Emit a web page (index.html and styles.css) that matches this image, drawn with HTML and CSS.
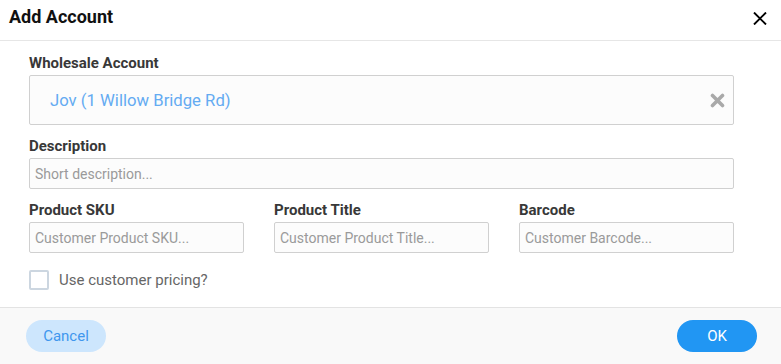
FILE: index.html
```html
<!DOCTYPE html>
<html lang="en">
<head>
    <meta charset="UTF-8">
    <meta name="viewport" content="width=device-width, initial-scale=1.0">
    <title>Add Account</title>
    <link rel="stylesheet" href="styles.css">
</head>
<body>
    <div class="modal">
        <div class="modal-header">
            <h2>Add Account</h2>
            <button class="close-btn" aria-label="Close">
                <svg width="14" height="13" viewBox="0 0 14 13">
                    <path d="M1 0.5 L13 12.5 M13 0.5 L1 12.5" stroke="#000" stroke-width="1.9" fill="none"/>
                </svg>
            </button>
        </div>

        <div class="modal-body">
            <div class="field">
                <label>Wholesale Account</label>
                <div class="select-box">
                    <span class="select-value">Jov (1 Willow Bridge Rd)</span>
                    <svg class="clear-icon" width="15" height="15" viewBox="0 0 15 15">
                        <path d="M2.5 2.5 L12.5 12.5 M12.5 2.5 L2.5 12.5" stroke="#a9a9a9" stroke-width="3.6" stroke-linecap="round" fill="none"/>
                    </svg>
                </div>
            </div>

            <div class="field">
                <label>Description</label>
                <input type="text" placeholder="Short description...">
            </div>

            <div class="field-row">
                <div class="field">
                    <label>Product SKU</label>
                    <input type="text" placeholder="Customer Product SKU...">
                </div>
                <div class="field">
                    <label>Product Title</label>
                    <input type="text" placeholder="Customer Product Title...">
                </div>
                <div class="field">
                    <label>Barcode</label>
                    <input type="text" placeholder="Customer Barcode...">
                </div>
            </div>

            <label class="check-row">
                <span class="checkbox"></span>
                <span>Use customer pricing?</span>
            </label>
        </div>

        <!-- Footer -->
        <div class="modal-footer">
            <button class="btn btn-cancel">Cancel</button>
            <button class="btn btn-ok">OK</button>
        </div>
    </div>
</body>
</html>
```

FILE: styles.css
```css
* { margin: 0; padding: 0; box-sizing: border-box; font-family: Roboto, "Liberation Sans", sans-serif; }
body { background: #fff; color: #333; }

.modal { width: 781px; height: 364px; display: flex; flex-direction: column; }

.modal-header {
    height: 41px;
    padding: 6px 14px 0 9px;
    display: flex;
    justify-content: space-between;
    align-items: flex-start;
    border-bottom: 1px solid #e6e6e6;
}
.modal-header h2 {
    font-size: 18px;
    line-height: 22px;
    font-weight: bold;
    color: #111;
}
.close-btn {
    margin-top: 6px;
    border: none;
    background: none;
    display: flex;
    cursor: pointer;
}

.modal-body {
    padding: 14px 47px 17px 29px;
}

.field { display: flex; flex-direction: column; margin-bottom: 13px; }
.field label {
    font-size: 15px;
    line-height: 17px;
    font-weight: bold;
    color: #383838;
    margin-bottom: 3px;
}

.select-box {
    height: 50px;
    border: 1px solid #d0d0d0;
    background: #fcfcfc;
    border-radius: 2px;
    display: flex;
    align-items: center;
    justify-content: space-between;
    padding: 0 8px 0 20px;
}
.select-value { font-size: 16.7px; color: #64abf2; }

input {
    height: 31px;
    border: 1px solid #d0d0d0;
    background: #fcfcfc;
    border-radius: 2px;
    padding: 0 5px;
    font-size: 14px;
    color: #333;
    outline: none;
}
input::placeholder { color: #9a9a9a; }

.field-row { display: grid; grid-template-columns: repeat(3, 1fr); column-gap: 30px; }
.field-row .field { margin-bottom: 17px; }

.check-row { display: flex; align-items: center; gap: 10px; font-size: 15px; color: #666; }
.checkbox {
    width: 20px;
    height: 20px;
    border: 2px solid #ccd6e0;
    border-radius: 2px;
    background: #fff;
}

.modal-footer {
    flex: 1;
    border-top: 1px solid #e3e3e3;
    background: #f9f9f9;
    padding: 12px 24px 0 26px;
    display: flex;
    justify-content: space-between;
    align-items: flex-start;
}
.btn {
    width: 80px;
    height: 32px;
    border: none;
    border-radius: 16px;
    font-size: 15px;
    cursor: pointer;
}
.btn-cancel { background: #cde6fd; color: #3f97ee; }
.btn-ok { background: #2196f3; color: #fff; }
```
